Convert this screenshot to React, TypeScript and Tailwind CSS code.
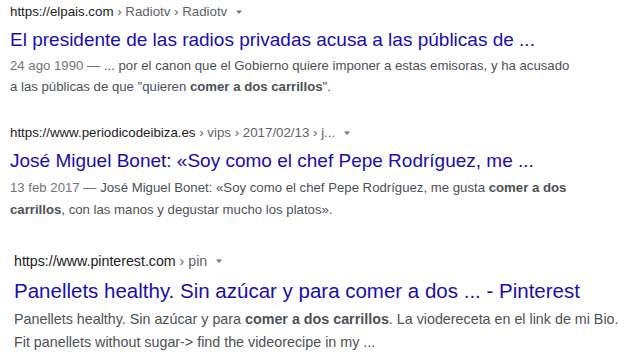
import React from "react";

const Arrow = () => (
  <svg width="10" height="10" viewBox="0 0 10 10" className="ml-[7px] inline-block">
    <path d="M2 3.5 L8 3.5 L5 7 Z" fill="#70757a" />
  </svg>
);

export default function App() {
  return (
    <div
      className="w-[630px] h-[353px] bg-white overflow-hidden"
      style={{ fontFamily: '"Liberation Sans", Arial, sans-serif' }}
    >
      {/* Result 1 */}
      <div className="pl-[10px] pt-[3px]">
        <div className="flex items-center h-[18px] text-[13.3px] leading-[18px] whitespace-nowrap">
          <span className="text-[#202124]">https://elpais.com</span>
          <span className="text-[#5f6368]">&nbsp;› Radiotv › Radiotv</span>
          <Arrow />
        </div>
        <div className="mt-[6px] text-[19px] leading-[26px] text-[#1a0dab] whitespace-nowrap">
          El presidente de las radios privadas acusa a las públicas de ...
        </div>
        <div className="mt-[2px] text-[13.2px] leading-[21px] text-[#4d5156]">
          <div className="whitespace-nowrap">
            <span className="text-[#70757a]">24 ago 1990 — </span>... por el canon que el Gobierno quiere imponer a estas emisoras, y ha acusado
          </div>
          <div className="whitespace-nowrap">
            a las públicas de que "quieren <b className="text-[#4d5156]">comer a dos carrillos</b>".
          </div>
        </div>
      </div>

      {/* Result 2 */}
      <div className="pl-[10px] pt-[27px]">
        <div className="flex items-center h-[18px] text-[13.3px] leading-[18px] whitespace-nowrap">
          <span className="text-[#202124]">https://www.periodicodeibiza.es</span>
          <span className="text-[#5f6368]">&nbsp;› vips › 2017/02/13 › j...</span>
          <Arrow />
        </div>
        <div className="mt-[6px] text-[19px] leading-[26px] text-[#1a0dab] whitespace-nowrap">
          José Miguel Bonet: «Soy como el chef Pepe Rodríguez, me ...
        </div>
        <div className="mt-[3px] text-[13.2px] leading-[22px] text-[#4d5156]">
          <div className="whitespace-nowrap">
            <span className="text-[#70757a]">13 feb 2017 — </span>José Miguel Bonet: «Soy como el chef Pepe Rodríguez, me gusta <b className="text-[#4d5156]">comer a dos</b>
          </div>
          <div className="whitespace-nowrap">
            <b className="text-[#4d5156]">carrillos</b>, con las manos y degustar mucho los platos».
          </div>
        </div>
      </div>

      {/* Result 3 */}
      <div className="pl-[14px] pt-[30px]">
        <div className="flex items-center h-[20px] text-[14.2px] leading-[20px] whitespace-nowrap">
          <span className="text-[#202124]">https://www.pinterest.com</span>
          <span className="text-[#5f6368]">&nbsp;› pin</span>
          <Arrow />
        </div>
        <div className="mt-[6px] text-[20.5px] leading-[28px] text-[#1a0dab] whitespace-nowrap">
          Panellets healthy. Sin azúcar y para comer a dos ... - Pinterest
        </div>
        <div className="mt-[3px] text-[14.3px] leading-[23px] text-[#4d5156]">
          <div className="whitespace-nowrap">
            Panellets healthy. Sin azúcar y para <b className="text-[#4d5156]">comer a dos carrillos</b>. La viodereceta en el link de mi Bio.
          </div>
          <div className="whitespace-nowrap">Fit panellets without sugar-&gt; find the videorecipe in my ...</div>
        </div>
      </div>
    </div>
  );
}
